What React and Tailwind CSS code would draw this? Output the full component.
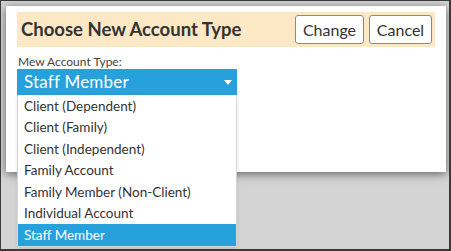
import React from "react";

const items = [
  "Client (Dependent)",
  "Client (Family)",
  "Client (Independent)",
  "Family Account",
  "Family Member (Non-Client)",
  "Individual Account",
  "Staff Member",
];

export default function App() {
  return (
    <div
      className="w-[451px] h-[251px] overflow-hidden bg-[#d4d4d4] border-t border-l border-r-2 border-b-2 border-[#3a3a3a] pt-[5px] pl-[5px]"
      style={{ fontFamily: 'Lato, "Noto Sans", sans-serif' }}
    >
      <div className="relative w-[440px] h-[166px] bg-white shadow-[0_2px_9px_rgba(0,0,0,0.55)] px-[11px] pt-[6px]">
        <div className="h-[35px] bg-[#fde8c6] flex items-center justify-between pl-[4px] pr-[3px]">
          <div className="text-[18.5px] font-bold text-[#333] leading-none">
            Choose New Account Type
          </div>
          <div className="flex gap-[5px]">
            <button className="h-[29px] w-[69px] bg-white border border-[#8a8a8a] rounded-[3px] text-[16px] text-[#333] leading-none">
              Change
            </button>
            <button className="h-[29px] w-[63px] bg-white border border-[#8a8a8a] rounded-[3px] text-[16px] text-[#333] leading-none">
              Cancel
            </button>
          </div>
        </div>
        <div className="mt-[8px] pl-[1px] text-[12px] leading-[13px] text-[#444]">
          Mew Account Type:
        </div>
        <div className="relative w-[220px] mt-[1px]">
          <div className="h-[26px] bg-[#27a1db] text-white text-[17px] tracking-[0.2px] flex items-center justify-between pl-[7px] pr-[5px]">
            <span>Staff Member</span>
            <svg width="8" height="5" viewBox="0 0 8 5">
              <polygon points="0,0 8,0 4,5" fill="white" />
            </svg>
          </div>
          <div className="absolute left-0 top-[26px] w-[220px] bg-white border-l border-r border-b border-[#d6d6d6] shadow-[0_2px_4px_rgba(0,0,0,0.1)]">
            {items.map((t, i) => (
              <div
                key={t}
                className={
                  i === items.length - 1
                    ? "h-[21.5px] flex items-center pl-[6px] text-[13.5px] bg-[#27a1db] text-white"
                    : "h-[21.5px] flex items-center pl-[6px] text-[13.5px] text-[#333]"
                }
              >
                {t}
              </div>
            ))}
          </div>
        </div>
      </div>
    </div>
  );
}
